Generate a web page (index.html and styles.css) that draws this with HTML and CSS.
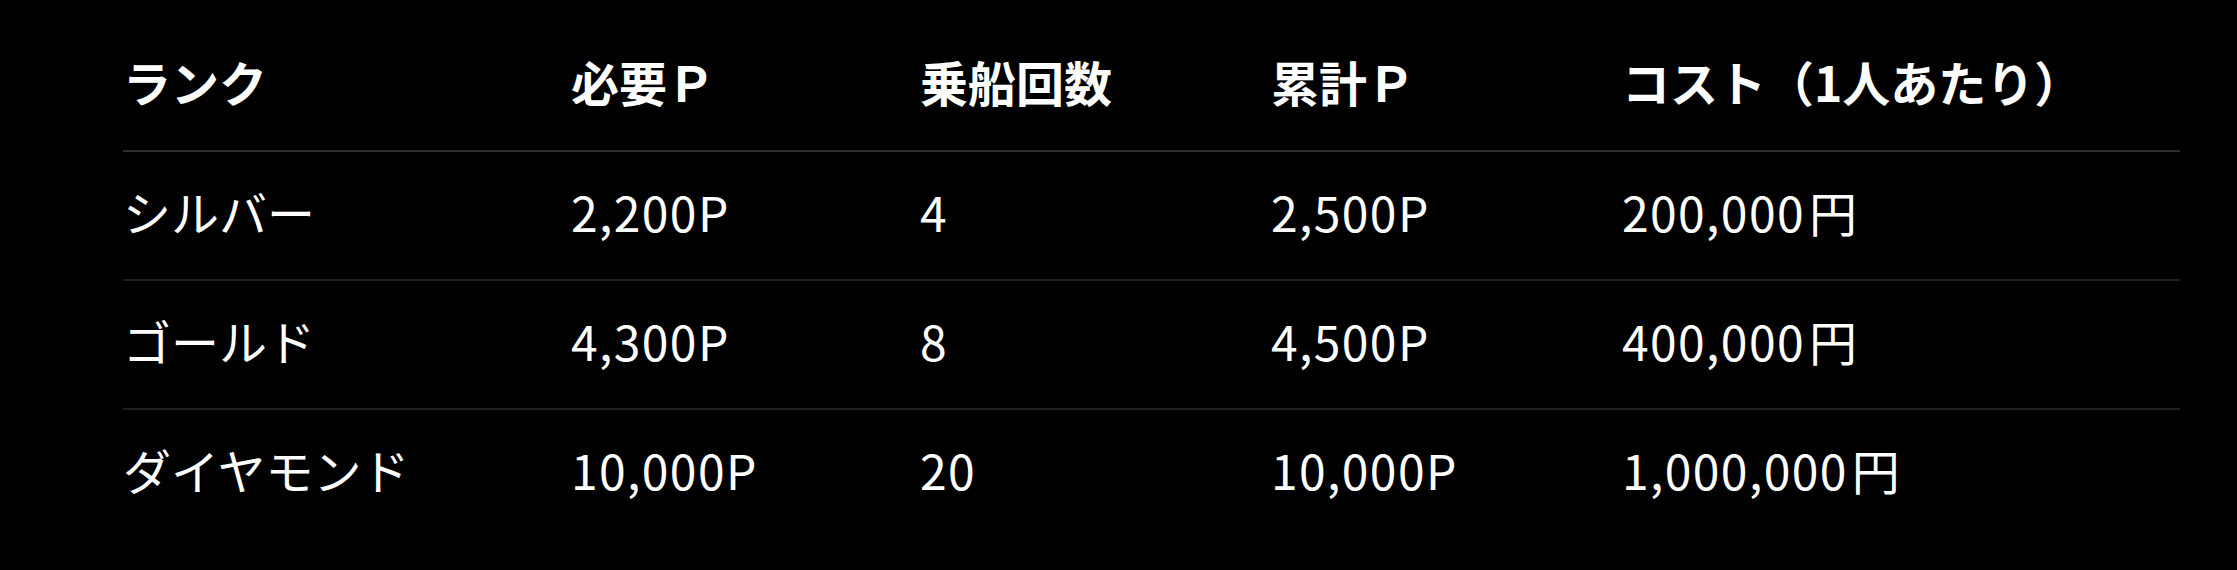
FILE: index.html
```html
<!DOCTYPE html>
<html lang="ja">
<head>
<meta charset="utf-8">
<title>ランク</title>
<link rel="stylesheet" href="styles.css">
</head>
<body>
<div class="wrap">
  <table class="rank-table">
    <colgroup>
      <col class="c1"><col class="c2"><col class="c3"><col class="c4"><col class="c5">
    </colgroup>
    <thead>
      <tr>
        <th>ランク</th>
        <th>必要Ｐ</th>
        <th>乗船回数</th>
        <th>累計Ｐ</th>
        <th>コスト（1人あたり）</th>
      </tr>
    </thead>
    <tbody>
      <tr>
        <td>シルバー</td>
        <td class="num">2,200P</td>
        <td class="num">4</td>
        <td class="num">2,500P</td>
        <td class="num">200,000<span class="yen">円</span></td>
      </tr>
      <tr>
        <td>ゴールド</td>
        <td class="num">4,300P</td>
        <td class="num">8</td>
        <td class="num">4,500P</td>
        <td class="num">400,000<span class="yen">円</span></td>
      </tr>
      <tr>
        <td>ダイヤモンド</td>
        <td class="num">10,000P</td>
        <td class="num">20</td>
        <td class="num">10,000P</td>
        <td class="num">1,000,000<span class="yen">円</span></td>
      </tr>
    </tbody>
  </table>
</div>
</body>
</html>
```
FILE: styles.css
```css
html, body {
  margin: 0;
  padding: 0;
  background: #000;
}
body {
  font-family: "Noto Sans CJK JP", "Noto Sans", sans-serif;
  color: #fff;
}
.wrap {
  padding: 22px 57px 0 123px;
}
.rank-table {
  width: 2057px;
  border-collapse: collapse;
  table-layout: fixed;
}
.c1 { width: 448px; }
.c2 { width: 349px; }
.c3 { width: 351px; }
.c4 { width: 351px; }
.c5 { width: 558px; }
.rank-table th,
.rank-table td {
  padding: 0 0 8px 0;
  text-align: left;
  vertical-align: middle;
  font-size: 48px;
  line-height: 1.2;
  white-space: nowrap;
}
.rank-table th {
  height: 120px;
  font-weight: 700;
  border-bottom: 2px solid #2e2e2e;
}
.rank-table td {
  height: 119px;
  font-weight: 400;
  border-bottom: 2px solid #1e1e1e;
}
.rank-table td.num {
  letter-spacing: 1.4px;
}
.yen {
  margin-left: 4px;
  letter-spacing: 0;
}
.rank-table tbody tr:last-child td {
  border-bottom: none;
}
```
